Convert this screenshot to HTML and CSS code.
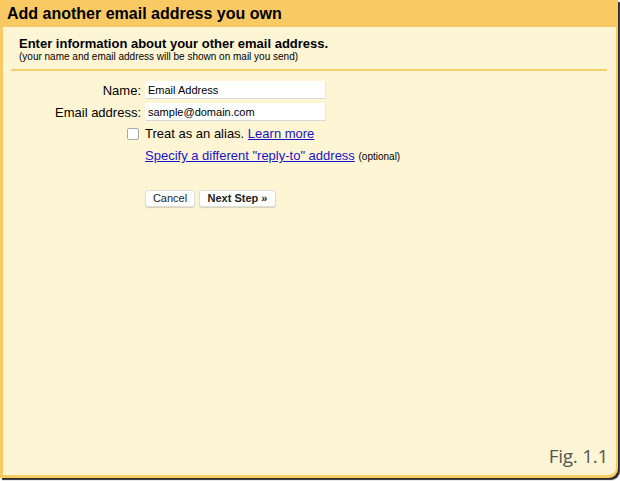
FILE: index.html
```html
<!DOCTYPE html>
<html>
<head>
<meta charset="utf-8">
<link rel="stylesheet" href="styles.css">
</head>
<body>
<div class="frame">
  <div class="title">Add another email address you own</div>
  <div class="panel">
    <div class="intro">
      <div class="intro-head">Enter information about your other email address.</div>
      <div class="intro-note">(your name and email address will be shown on mail you send)</div>
    </div>
    <div class="rule"></div>
    <div class="form">
      <label class="lbl">Name:</label>
      <div class="field"><span class="input">Email Address</span></div>
      <label class="lbl">Email address:</label>
      <div class="field"><span class="input">sample@domain.com</span></div>
      <div class="lbl"><span class="check"></span></div>
      <div class="text">Treat as an alias. <a href="#" class="link">Learn more</a></div>
      <div></div>
      <div class="text reply"><a href="#" class="link">Specify a different "reply-to" address</a> <span class="opt">(optional)</span></div>
      <div></div>
      <div class="buttons">
        <span class="btn btn-cancel">Cancel</span>
        <span class="btn btn-bold">Next Step »</span>
      </div>
    </div>
    <div class="fig">Fig. 1.1</div>
  </div>
</div>
</body>
</html>
```
FILE: styles.css
```css
html, body {
  margin: 0;
  padding: 0;
  background: #ffffff;
}
body {
  width: 620px;
  height: 481px;
  overflow: hidden;
  font-family: "Liberation Sans", Arial, sans-serif;
  color: #000;
}
.frame {
  width: 618px;
  height: 478px;
  background: #f9c964;
  border-bottom-right-radius: 9px;
  box-shadow: 2px 2px 1px rgba(20, 20, 20, 0.9);
  display: flex;
  flex-direction: column;
  box-sizing: border-box;
  padding: 0 2px 3px 3px;
}
.title {
  height: 27px;
  font-size: 16px;
  font-weight: bold;
  line-height: 28px;
  padding-left: 4px;
  flex: none;
}
.panel {
  flex: 1;
  background: #fef5d4;
  border-bottom-right-radius: 7px;
  display: flex;
  flex-direction: column;
  position: relative;
}
.intro {
  padding: 9px 0 0 16px;
  height: 33px;
}
.intro-head {
  font-size: 13px;
  font-weight: bold;
  line-height: 15px;
}
.intro-note {
  font-size: 10px;
  line-height: 11px;
}
.rule {
  height: 2px;
  background: #f6cf6d;
  margin: 0 9px 0 8px;
}
.form {
  display: grid;
  grid-template-columns: 138px 1fr;
  column-gap: 4px;
  align-items: center;
  padding-top: 10px;
}
.lbl {
  text-align: right;
  font-size: 13px;
  line-height: 17px;
  height: 17px;
  margin-bottom: 4px;
  display: flex;
  justify-content: flex-end;
  align-items: center;
}
.field {
  margin-bottom: 4px;
}
.input {
  display: block;
  width: 181px;
  height: 18px;
  box-sizing: border-box;
  background: #fff;
  border: 1px solid #fff;
  border-bottom-color: #d8d8d8;
  border-right-color: #e6e6e6;
  font-size: 11px;
  line-height: 17px;
  padding-left: 2px;
}
.check {
  display: inline-block;
  width: 10px;
  height: 10px;
  border: 1px solid #a8a8a8;
  border-radius: 2px;
  background: #fff;
  margin-right: 2px;
}
.text {
  font-size: 13px;
  line-height: 17px;
  height: 17px;
  margin-bottom: 5px;
}
.link {
  color: #1a14c8;
  text-decoration: underline;
}
.reply {
  margin-bottom: 0;
}
.opt {
  font-size: 10px;
}
.buttons {
  display: flex;
  gap: 4px;
  padding-top: 26px;
}
.btn {
  display: inline-block;
  height: 17px;
  box-sizing: border-box;
  background: #fff;
  border: 1px solid #dedede;
  border-radius: 3px;
  box-shadow: 0 1px 1px rgba(0, 0, 0, 0.15);
  font-size: 11px;
  line-height: 15px;
  color: #222;
  text-align: center;
  padding: 0;
}
.btn-cancel {
  width: 50px;
}
.btn-bold {
  font-weight: bold;
  width: 77px;
}
.fig {
  position: absolute;
  right: 8px;
  bottom: 6px;
  font-family: "Open Sans", sans-serif;
  font-size: 19px;
  color: #555;
  letter-spacing: -0.3px;
}
```
